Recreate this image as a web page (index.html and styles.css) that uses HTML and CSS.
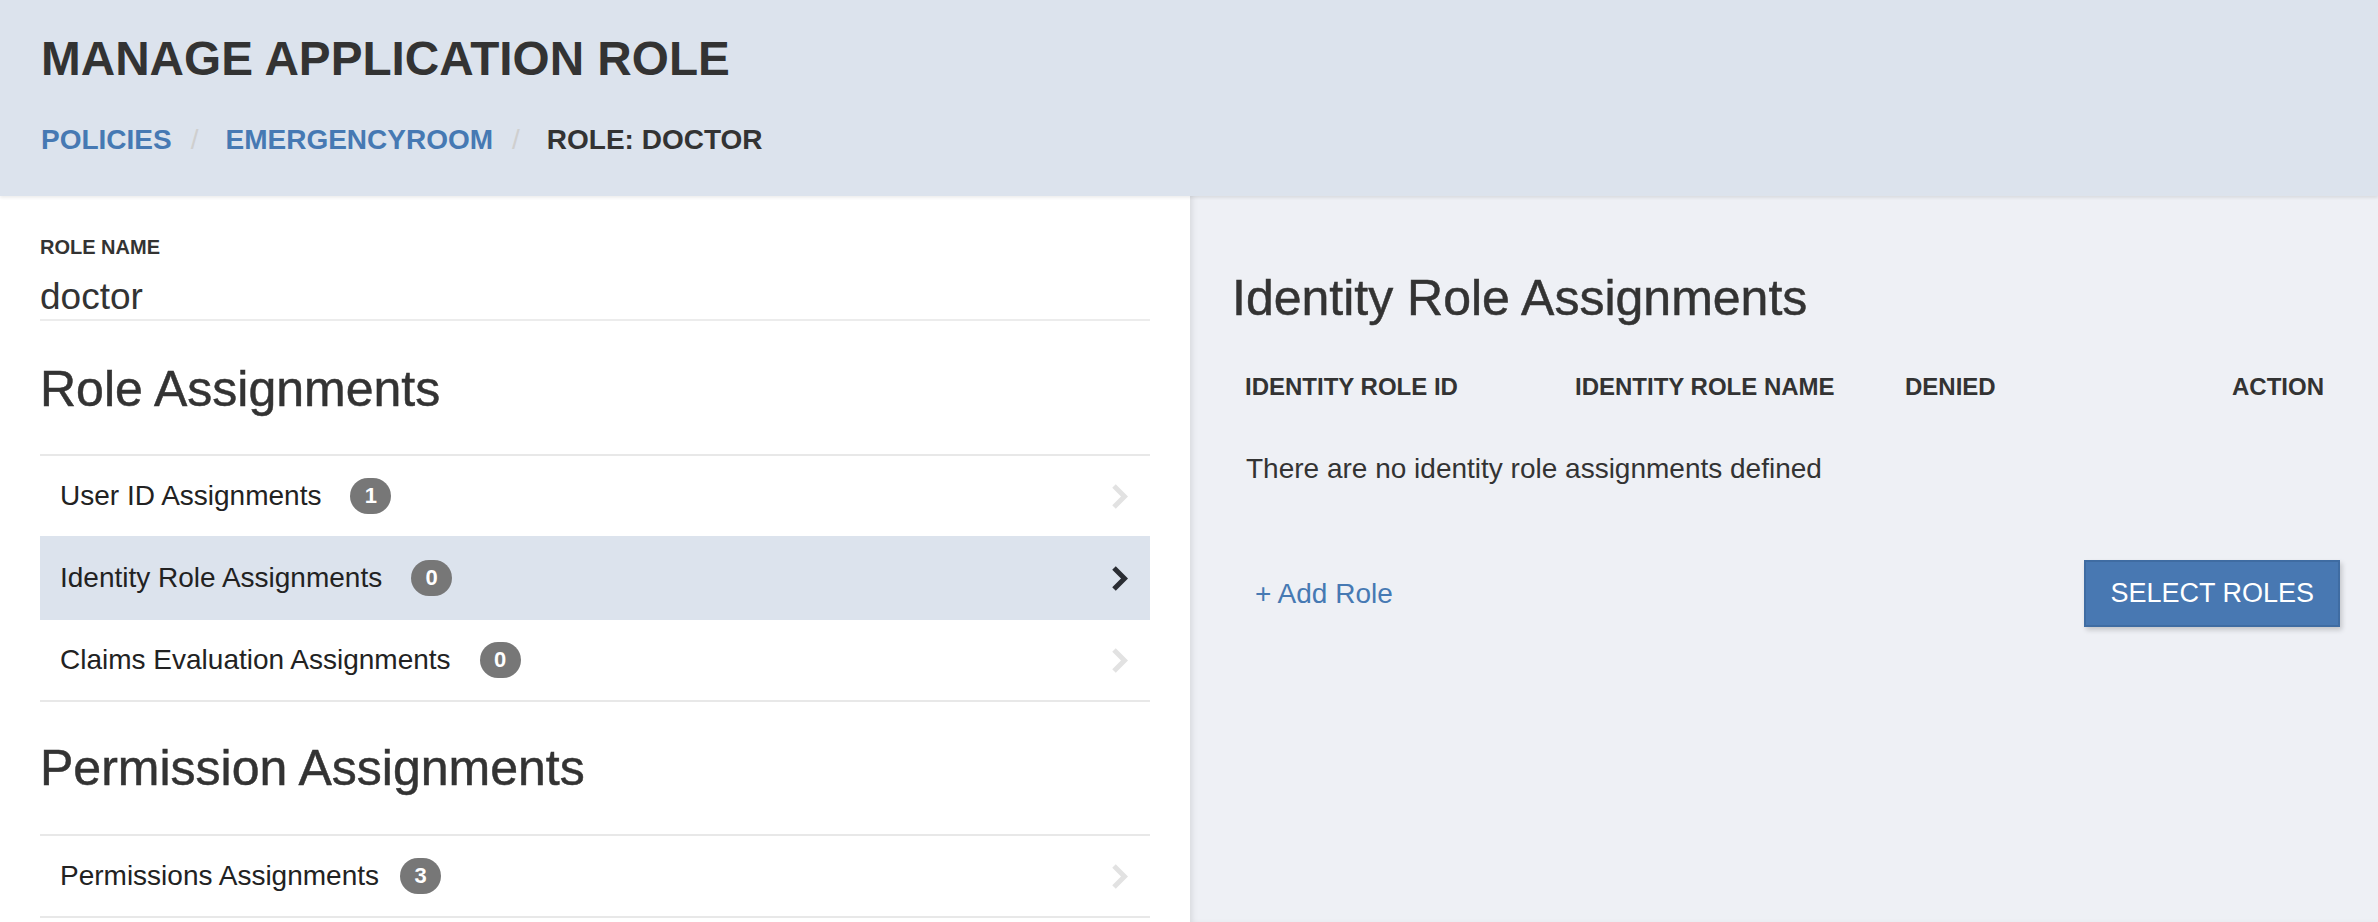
FILE: index.html
```html
<!DOCTYPE html>
<html lang="en">
<head>
<meta charset="utf-8">
<title>Manage Application Role</title>
<link rel="stylesheet" href="styles.css">
</head>
<body>
<header class="page-header">
  <h1 class="page-title">MANAGE APPLICATION ROLE</h1>
  <nav class="breadcrumb">
    <a class="crumb-link" href="#">POLICIES</a><span class="crumb-sep">/</span><a class="crumb-link" href="#">EMERGENCYROOM</a><span class="crumb-sep">/</span><span class="crumb-current">ROLE: DOCTOR</span>
  </nav>
</header>
<main class="layout">
  <section class="left-panel">
    <div class="field-label">ROLE NAME</div>
    <div class="field-value">doctor</div>

    <h2 class="section-title">Role Assignments</h2>
    <ul class="nav-list">
      <li class="nav-item">
        <span class="nav-text">User ID Assignments</span><span class="badge">1</span>
        <svg class="chevron" viewBox="0 0 17 27" width="17" height="27"><polyline points="3,3 13.5,13.5 3,24"/></svg>
      </li>
      <li class="nav-item active">
        <span class="nav-text">Identity Role Assignments</span><span class="badge">0</span>
        <svg class="chevron" viewBox="0 0 17 27" width="17" height="27"><polyline points="3,3 13.5,13.5 3,24"/></svg>
      </li>
      <li class="nav-item">
        <span class="nav-text">Claims Evaluation Assignments</span><span class="badge">0</span>
        <svg class="chevron" viewBox="0 0 17 27" width="17" height="27"><polyline points="3,3 13.5,13.5 3,24"/></svg>
      </li>
    </ul>

    <h2 class="section-title section-title-next">Permission Assignments</h2>
    <ul class="nav-list">
      <li class="nav-item">
        <span class="nav-text">Permissions Assignments</span><span class="badge badge-tight">3</span>
        <svg class="chevron" viewBox="0 0 17 27" width="17" height="27"><polyline points="3,3 13.5,13.5 3,24"/></svg>
      </li>
    </ul>
  </section>

  <section class="right-panel">
    <h2 class="detail-title">Identity Role Assignments</h2>
    <div class="table-head">
      <span class="th">IDENTITY ROLE ID</span>
      <span class="th">IDENTITY ROLE NAME</span>
      <span class="th">DENIED</span>
      <span class="th th-right">ACTION</span>
    </div>
    <p class="empty-msg">There are no identity role assignments defined</p>
    <div class="actions">
      <a class="add-link" href="#">+ Add Role</a>
      <button class="btn-primary" type="button">SELECT ROLES</button>
    </div>
  </section>
</main>
</body>
</html>
```

FILE: styles.css
```css
* { box-sizing: border-box; }

html, body {
  margin: 0;
  padding: 0;
  height: 100%;
}

body {
  font-family: "Liberation Sans", Arial, Helvetica, sans-serif;
  color: #333;
  background: #fff;
  display: flex;
  flex-direction: column;
  overflow: hidden;
}

a { text-decoration: none; }

/* Header */
.page-header {
  background: #dce3ed;
  height: 196px;
  padding: 32px 41px 0;
  box-shadow: 0 2px 3px rgba(0, 0, 0, 0.07);
  position: relative;
  z-index: 2;
  flex: none;
}

.page-title {
  margin: 0;
  font-size: 47.7px;
  line-height: 53px;
  font-weight: 700;
  color: #333;
}

.breadcrumb {
  margin-top: 38px;
  font-size: 28px;
  line-height: 34px;
  font-weight: 700;
  display: flex;
  align-items: baseline;
}

.crumb-link { color: #4679b3; }

.crumb-sep {
  color: #cfcfcf;
  font-weight: 400;
  margin: 0 27px 0 19px;
}

.crumb-current { color: #333; }

/* Layout */
.layout {
  flex: 1;
  display: flex;
  min-height: 0;
}

.left-panel {
  width: 1190px;
  flex: none;
  background: #fff;
  padding: 40px 40px 0;
}

.field-label {
  font-size: 20px;
  line-height: 23px;
  font-weight: 700;
  color: #333;
}

.field-value {
  margin-top: 16px;
  font-size: 37px;
  line-height: 43px;
  padding-bottom: 1px;
  border-bottom: 2px solid #ececec;
}

.section-title {
  margin: 41px 0 38px;
  font-size: 50px;
  line-height: 54px;
  font-weight: 400;
  color: #333;
  -webkit-text-stroke: 0.5px #333;
}

.section-title-next { margin-top: 39px; margin-bottom: 39px; }

.nav-list {
  list-style: none;
  margin: 0;
  padding: 0;
  border-top: 2px solid #e8e8e8;
}

.nav-item {
  height: 82px;
  display: flex;
  align-items: center;
  padding: 0 22px 0 20px;
  border-bottom: 2px solid #e8e8e8;
  font-size: 28px;
  color: #222;
}

.nav-item.active {
  background: #dce3ed;
  border-bottom-color: #dce3ed;
  box-shadow: 0 -2px 0 #dce3ed;
}

.badge {
  display: inline-flex;
  align-items: center;
  justify-content: center;
  min-width: 41px;
  height: 36px;
  padding: 0 12px;
  margin-left: 29px;
  border-radius: 18px;
  background: #777;
  color: #fff;
  font-size: 22px;
  font-weight: 700;
}

.badge-tight { margin-left: 21px; }

.chevron {
  margin-left: auto;
  fill: none;
  stroke: #e2e2e2;
  stroke-width: 5;
  stroke-linejoin: miter;
}

.nav-item.active .chevron { stroke: #2a2d33; }

/* Right panel */
.right-panel {
  flex: 1;
  background: #eef0f5;
  padding: 75px 38px 0 42px;
  box-shadow: inset 5px 0 6px -3px rgba(0, 0, 0, 0.1);
}

.detail-title {
  margin: 0;
  font-size: 50px;
  line-height: 54px;
  font-weight: 400;
  color: #333;
  -webkit-text-stroke: 0.5px #333;
}

.table-head {
  margin-top: 47px;
  display: grid;
  grid-template-columns: 330px 330px 1fr auto;
  padding: 0 16px 0 13px;
  font-size: 24px;
  line-height: 29px;
  font-weight: 700;
  color: #333;
}

.th-right { text-align: right; }

.empty-msg {
  margin: 51px 0 0;
  padding-left: 14px;
  font-size: 28px;
  line-height: 34px;
  color: #333;
}

.actions {
  margin-top: 74px;
  display: flex;
  align-items: center;
  justify-content: space-between;
}

.add-link {
  margin-left: 23px;
  font-size: 28px;
  color: #4679b3;
}

.btn-primary {
  font-family: "Liberation Sans", Arial, Helvetica, sans-serif;
  font-size: 27px;
  height: 67px;
  padding: 0 24px;
  background: #4878b2;
  color: #fff;
  border: 2px solid #3f6ca2;
  border-radius: 0;
  box-shadow: 2px 3px 5px rgba(0, 0, 0, 0.18);
}
```
